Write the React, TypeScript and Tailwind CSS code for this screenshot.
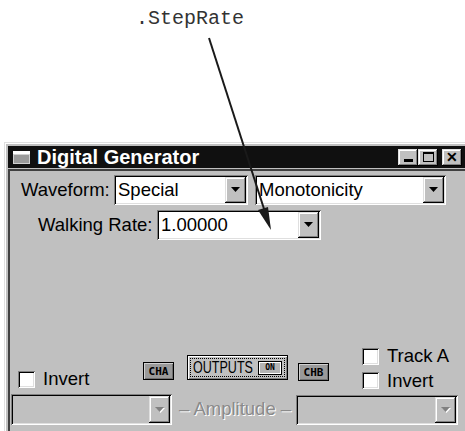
import React from "react";

const sunken =
  "shadow-[inset_1px_1px_0_#808080,inset_-1px_-1px_0_#ffffff,inset_2px_2px_0_#000000,inset_-2px_-2px_0_#dfdfdf]";
const raised =
  "shadow-[inset_-1px_-1px_0_#000000,inset_1px_1px_0_#dfdfdf,inset_-2px_-2px_0_#808080,inset_2px_2px_0_#ffffff]";

const Arrow = ({ disabled }: { disabled?: boolean }) => (
  <svg width="10" height="6" viewBox="0 0 10 6">
    {disabled && <polygon points="1,1 10,1 5.5,6" fill="#ffffff" />}
    <polygon points="0,0 9,0 4.5,5" fill={disabled ? "#808080" : "#000000"} />
  </svg>
);

const Combo = ({
  className,
  text,
  disabled,
}: {
  className: string;
  text?: string;
  disabled?: boolean;
}) => (
  <div
    className={`${className} flex h-[30px] p-[2px] ${sunken} ${
      disabled ? "bg-[#c0c0c0]" : "bg-white"
    }`}
  >
    <div className="flex-1 flex items-center pl-[2px] text-[18.5px] leading-none text-black overflow-hidden">
      {text}
    </div>
    <div className={`w-[21px] flex items-center justify-center bg-[#c0c0c0] ${raised}`}>
      <Arrow disabled={disabled} />
    </div>
  </div>
);

const Check = ({ label }: { label: string }) => (
  <div className="flex items-center gap-[8px] text-[18.5px] leading-none text-black">
    <div className={`w-[17px] h-[17px] bg-white ${sunken}`} />
    <span>{label}</span>
  </div>
);

const Chan = ({ label, className }: { label: string; className: string }) => (
  <div
    className={`${className} h-[18px] w-[31px] flex items-center justify-center border border-black bg-[#9a9a9a] shadow-[inset_1px_1px_0_#d0d0d0,inset_-1px_-1px_0_#707070] font-['DejaVu_Sans_Mono',monospace] font-bold text-[11px] leading-none text-black`}
  >
    {label}
  </div>
);

const TitleButton = ({ children, className = "" }: { children: React.ReactNode; className?: string }) => (
  <div className={`${className} w-[20px] h-[17px] flex items-center justify-center bg-[#c0c0c0] ${raised}`}>
    {children}
  </div>
);

export default function App() {
  return (
    <div className="relative w-[465px] h-[431px] bg-white overflow-hidden font-['Liberation_Sans',Arial,sans-serif]">
      <div className="h-[142px] pt-[9px] pl-[136px] font-['Liberation_Mono','Courier_New',monospace] text-[20px] leading-none text-[#333]">
        .StepRate
      </div>

      {/* window */}
      <div className="ml-[4px] w-[480px] bg-[#c0c0c0] p-[4px] shadow-[inset_1px_1px_0_#dfdfdf,inset_2px_2px_0_#ffffff]">
        <div className="h-[22px] flex items-center bg-[#101010] pl-[5px] pr-[18px]">
          <svg width="17" height="13" viewBox="0 0 17 13">
            <rect x="0" y="0" width="17" height="13" fill="#d0d0d0" />
            <rect x="0" y="0" width="17" height="3" fill="#ffffff" />
            <rect x="1" y="4" width="15" height="8" fill="#9a9a9a" />
          </svg>
          <span className="ml-[7px] text-white font-bold text-[20px] leading-none">Digital Generator</span>
          <div className="ml-auto flex items-center">
            <TitleButton>
              <div className="w-[9px] h-[3px] bg-black mt-[7px]" />
            </TitleButton>
            <TitleButton>
              <div className="w-[11px] h-[10px] border border-black border-t-[2px]" />
            </TitleButton>
            <TitleButton className="ml-[4px]">
              <span className="text-black font-bold text-[14px] leading-none">✕</span>
            </TitleButton>
          </div>
        </div>

        {/* client */}
        <div className="mt-[1px] h-[270px] p-[2px] shadow-[inset_2px_2px_0_#404040]">
          <div className="flex items-center h-[30px] mt-[4px] pl-[11px]">
            <span className="text-[18.5px] leading-none text-black w-[93px]">Waveform:</span>
            <Combo className="w-[134px]" text="Special" />
            <Combo className="w-[191px] ml-[7px]" text="Monotonicity" />
          </div>
          <div className="flex items-center h-[30px] mt-[5px] pl-[28px]">
            <span className="text-[18.5px] leading-none text-black w-[119px]">Walking Rate:</span>
            <Combo className="w-[164px]" text="1.00000" />
          </div>

          <div className="h-[105px]" />

          <div className="flex items-start h-[45px]">
            <div className="w-[133px] pl-[8px] mt-[25px]">
              <Check label="Invert" />
            </div>
            <Chan label="CHA" className="mt-[17px]" />
            <div className="ml-[13px] mt-[10px] w-[101px] h-[25px] border border-black bg-[#c0c0c0] shadow-[inset_1px_1px_0_#ffffff,inset_-1px_-1px_0_#808080] p-[2px]">
              <div className="h-full flex items-center justify-between border border-dotted border-black pl-[2px] pr-[2px]">
                <span className="w-[60px] overflow-visible whitespace-nowrap">
                  <span className="inline-block origin-left scale-x-[0.76] text-[16.5px] leading-none text-black">
                    OUTPUTS
                  </span>
                </span>
                <div className="w-[24px] h-[14px] flex items-center justify-center bg-[#b4b4b4] border border-black shadow-[inset_1px_1px_0_#ffffff,inset_-1px_-1px_0_#ffffff] font-['DejaVu_Sans_Mono',monospace] font-bold text-[8px] leading-none text-black">
                  ON
                </div>
              </div>
            </div>
            <Chan label="CHB" className="ml-[10px] mt-[18px]" />
            <div className="ml-[33px] mt-[2px] flex flex-col gap-[6px]">
              <Check label="Track A" />
              <Check label="Invert" />
            </div>
          </div>

          <div className="flex items-center h-[31px] mt-[4px] pl-[1px]">
            <Combo className="w-[161px] h-[31px]" disabled />
            <span className="ml-[7px] text-[18.5px] leading-none text-[#8a8a8a] [text-shadow:1px_1px_0_#ffffff]">
              – Amplitude –
            </span>
            <Combo className="w-[162px] ml-[5px]" disabled />
          </div>
        </div>
      </div>

      <svg className="absolute inset-0 pointer-events-none" width="465" height="431" viewBox="0 0 465 431">
        <line x1="209" y1="38" x2="265" y2="212" stroke="#1a1a1a" strokeWidth="2" />
        <polygon points="271,230 268,207 258,210" fill="#1a1a1a" />
      </svg>
    </div>
  );
}
